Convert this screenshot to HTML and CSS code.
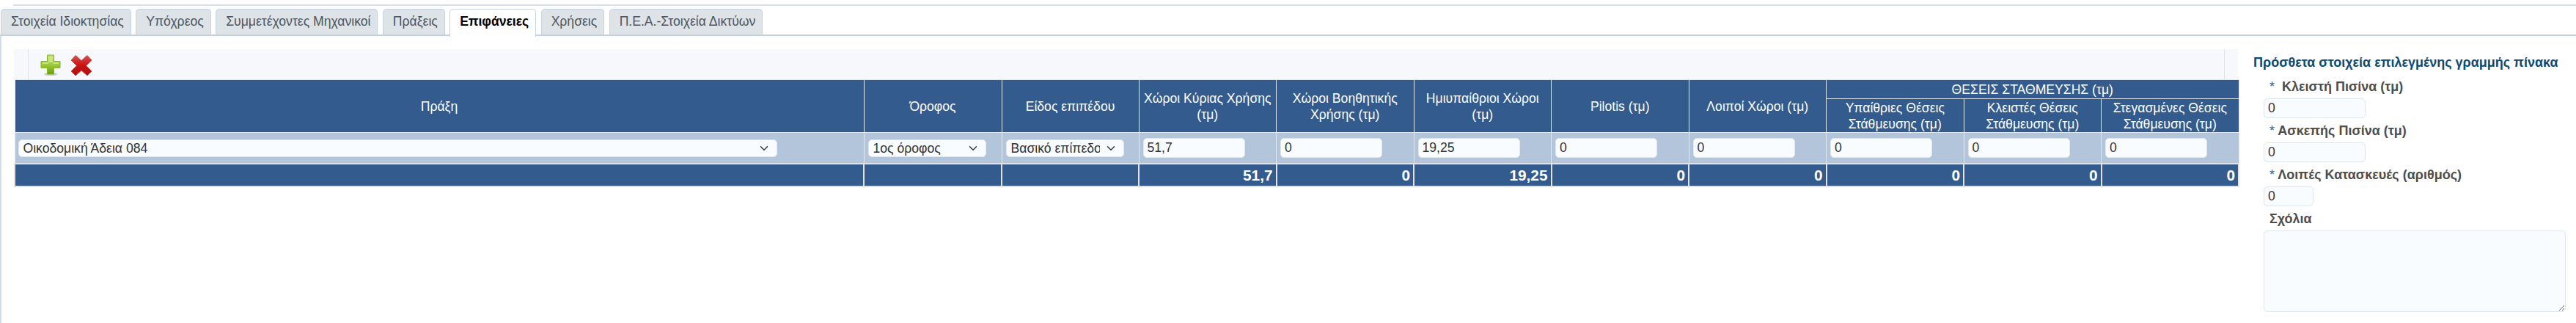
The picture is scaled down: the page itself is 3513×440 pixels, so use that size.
FILE: index.html
```html
<!DOCTYPE html>
<html lang="el">
<head>
    <meta charset="UTF-8">
    <meta name="viewport" content="width=device-width, initial-scale=1.0">
    <link rel="stylesheet" href="styles.css">
    <title>Επιφάνειες</title>
</head>
<body>

    <div class="top-rule"></div>

    <ul class="tabs">
        <li class="tab">Στοιχεία Ιδιοκτησίας</li>
        <li class="tab">Υπόχρεος</li>
        <li class="tab">Συμμετέχοντες Μηχανικοί</li>
        <li class="tab">Πράξεις</li>
        <li class="tab active">Επιφάνειες</li>
        <li class="tab">Χρήσεις</li>
        <li class="tab">Π.Ε.Α.-Στοιχεία Δικτύων</li>
    </ul>

    <div class="panel">
        <div class="grid-area">
            <div class="toolbar">
                <div class="toolbar-inner">
                    <svg class="icon-add" width="28" height="30" viewBox="0 0 28 30">
                        <defs>
                            <linearGradient id="addFill" x1="0" y1="0" x2="0" y2="1">
                                <stop offset="0" stop-color="#c3e06c"/>
                                <stop offset="0.5" stop-color="#9ccb3c"/>
                                <stop offset="1" stop-color="#679f05"/>
                            </linearGradient>
                        </defs>
                        <ellipse cx="14" cy="27" rx="9" ry="2" fill="#8d8d8d" opacity="0.45"/>
                        <path d="M9.500 1h9v8.500h8.500v9h-8.500v8.500h-9v-8.500h-8.500v-9h8.500z" fill="url(#addFill)" stroke="#86b52a" stroke-width="1" stroke-linejoin="round"/>
                        <path d="M11 3h6v8h8v2h-8v-2h-6v2h-8v-2h8z" fill="#d4eb91" opacity="0.7"/>
                    </svg>
                    <svg class="icon-del" width="30" height="30" viewBox="0 0 30 30">
                        <defs>
                            <linearGradient id="delFill" x1="0" y1="0" x2="0" y2="1">
                                <stop offset="0" stop-color="#d9504f"/>
                                <stop offset="0.5" stop-color="#c81414"/>
                                <stop offset="1" stop-color="#b00d0d"/>
                            </linearGradient>
                        </defs>
                        <path d="M1 8L7 1.500L15 8.500L23 1.500L29 8L21.500 15.500L29 23L23 29L15 22L7 29L1 23L8.500 15.500z" fill="url(#delFill)" stroke="#c4504f" stroke-width="1" stroke-linejoin="round"/>
                    </svg>
                </div>
            </div>

            <table class="grid">
                <colgroup>
                    <col class="col-action">
                    <col class="col-floor">
                    <col class="col-level">
                    <col class="col-num">
                    <col class="col-num">
                    <col class="col-num">
                    <col class="col-num">
                    <col class="col-num">
                    <col class="col-num">
                    <col class="col-num">
                    <col class="col-num">
                </colgroup>
                <thead>
                    <tr class="head-top">
                        <th rowspan="2">Πράξη</th>
                        <th rowspan="2">Όροφος</th>
                        <th rowspan="2">Είδος επιπέδου</th>
                        <th rowspan="2">Χώροι Κύριας Χρήσης (τμ)</th>
                        <th rowspan="2">Χώροι Βοηθητικής Χρήσης (τμ)</th>
                        <th rowspan="2">Ημιυπαίθριοι Χώροι (τμ)</th>
                        <th rowspan="2">Pilotis (τμ)</th>
                        <th rowspan="2">Λοιποί Χώροι (τμ)</th>
                        <th colspan="3">ΘΕΣΕΙΣ ΣΤΑΘΜΕΥΣΗΣ (τμ)</th>
                    </tr>
                    <tr class="head-sub">
                        <th>Υπαίθριες Θέσεις Στάθμευσης (τμ)</th>
                        <th>Κλειστές Θέσεις Στάθμευσης (τμ)</th>
                        <th>Στεγασμένες Θέσεις Στάθμευσης (τμ)</th>
                    </tr>
                </thead>
                <tbody>
                    <tr>
                        <td><select class="select-action"><option>Οικοδομική Άδεια 084</option></select></td>
                        <td><select class="select-small"><option>1ος όροφος</option></select></td>
                        <td><select class="select-small"><option>Βασικό επίπεδο</option></select></td>
                        <td><input class="field" type="text" value="51,7"></td>
                        <td><input class="field" type="text" value="0"></td>
                        <td><input class="field" type="text" value="19,25"></td>
                        <td><input class="field" type="text" value="0"></td>
                        <td><input class="field" type="text" value="0"></td>
                        <td><input class="field" type="text" value="0"></td>
                        <td><input class="field" type="text" value="0"></td>
                        <td><input class="field" type="text" value="0"></td>
                    </tr>
                </tbody>
                <tfoot>
                    <tr>
                        <td></td>
                        <td></td>
                        <td></td>
                        <td>51,7</td>
                        <td>0</td>
                        <td>19,25</td>
                        <td>0</td>
                        <td>0</td>
                        <td>0</td>
                        <td>0</td>
                        <td>0</td>
                    </tr>
                </tfoot>
            </table>
        </div>

        <form class="details">
            <h4>Πρόσθετα στοιχεία επιλεγμένης γραμμής πίνακα</h4>
            <label class="req"><span class="star">*</span>&nbsp; Κλειστή Πισίνα (τμ)</label>
            <input class="field" type="text" value="0">
            <label class="req"><span class="star">*</span> Ασκεπής Πισίνα (τμ)</label>
            <input class="field" type="text" value="0">
            <label class="req"><span class="star">*</span> Λοιπές Κατασκευές (αριθμός)</label>
            <input class="field short" type="text" value="0">
            <label class="req">Σχόλια</label>
            <textarea class="notes"></textarea>
        </form>
    </div>

</body>
</html>
```

FILE: styles.css
```css
body {
    font-family: "Liberation Sans", Arial, sans-serif;
    font-size: 17.6px;
    color: #333;
    background-color: #fff;
    margin: 0;
    height: 440px;
    overflow: hidden;
}

.top-rule {
    height: 2px;
    margin: 6px 0 4px 18px;
    background-color: #d5dfe9;
}

.tabs {
    display: flex;
    list-style: none;
    margin: 0;
    padding: 0 0 0 1px;
    height: 35px;
    border-bottom: 2px solid #c3d0df;
}

.tab {
    box-sizing: border-box;
    height: 35px;
    line-height: 33px;
    padding: 0 9px 0 13px;
    margin-right: 6.400px;
    color: #4c5660;
    background-color: #dee3e8;
    border: 1px solid #c6d3e2;
    border-bottom: none;
    border-radius: 5px 5px 0 0;
}

.tab.active {
    height: 38px;
    color: #000;
    font-weight: bold;
    background-color: #fff;
    position: relative;
    z-index: 1;
}

.panel {
    display: flex;
    align-items: flex-start;
    height: 393px;
    padding: 18px 0 0 18px;
    border-left: 2px solid #d3dcec;
    box-sizing: border-box;
}

.grid-area {
    width: 3033px;
    margin-left: -1px;
    flex: none;
}

.toolbar {
    height: 41px;
    background-color: #f7f8fc;
    padding-left: 19px;
    position: relative;
}

.toolbar::after {
    content: "";
    position: absolute;
    top: 0;
    right: 18px;
    bottom: 0;
    width: 1px;
    background-color: #dfe3ea;
}

.toolbar-inner {
    display: flex;
    gap: 13px;
    height: 100%;
    padding: 7px 0 0 16px;
    box-sizing: border-box;
    border-left: 1px solid #dfe3ea;
}

.grid {
    width: 3033px;
    table-layout: fixed;
    border-collapse: collapse;
    color: #fff;
}

.col-action { width: 1158px; }
.col-floor { width: 188px; }
.col-level { width: 187px; }
.col-num { width: 187.500px; }

.grid th {
    font-weight: normal;
    line-height: 22px;
    padding: 0 4px;
    background-color: #335b8e;
    border: 1px solid #dfe7f0;
    text-align: center;
}

.head-top { height: 26px; }
.head-sub { height: 46px; }

.grid tbody td {
    height: 41px;
    padding: 0 0 0 5px;
    background-color: #b3c5db;
    border: 1px solid #dfe7f0;
    border-bottom-color: #e2e2e2;
}

.grid tfoot td {
    height: 29px;
    padding: 0 4px 0 0;
    font-weight: bold;
    font-size: 20.800px;
    text-align: right;
    background-color: #335b8e;
    border: 2px solid #e2e2e2;
}

select {
    appearance: none;
    display: block;
    box-sizing: border-box;
    height: 24px;
    padding: 0 32px 0 6px;
    font-family: inherit;
    font-size: 17.600px;
    color: #333;
    background-color: #f8fcff;
    background-image: url("data:image/svg+xml,%3csvg xmlns='http://www.w3.org/2000/svg' viewBox='0 0 16 16'%3e%3cpath fill='none' stroke='%23343a40' stroke-linecap='round' stroke-linejoin='round' stroke-width='2' d='m2 5 6 6 6-6'/%3e%3c/svg%3e");
    background-repeat: no-repeat;
    background-position: right 9px center;
    background-size: 16px 12px;
    border: 1px solid #dfe6ee;
    border-radius: 5px;
}

.select-action {
    width: 1035px;
    margin-left: -1px;
}

.select-small {
    width: 161px;
}

.field {
    display: block;
    box-sizing: border-box;
    width: 139px;
    height: 27px;
    padding: 0 5px;
    font-family: inherit;
    font-size: 17.600px;
    color: #333;
    background-color: #f8fcff;
    border: 1px solid #dfe6ee;
    border-radius: 5px;
}

.field.short {
    width: 68px;
}

.details {
    width: 426px;
    margin-left: 21px;
    padding-top: 9px;
    flex: none;
}

.details h4 {
    margin: 0 0 13px;
    font-size: 18px;
    line-height: 18px;
    color: #0d4a73;
}

.details .req {
    display: block;
    margin: 6px 0 5px 22px;
    line-height: 22px;
    font-size: 18px;
    font-weight: bold;
    color: #4d4d4d;
}

.star {
    color: #2a6a9a;
    font-weight: normal;
}

.details .field {
    margin-left: 14px;
}

.notes {
    display: block;
    box-sizing: border-box;
    width: 412px;
    height: 111px;
    margin-left: 14px;
    background-color: #f8fcff;
    border: 1px solid #dfe6ee;
    border-radius: 5px;
}
```
